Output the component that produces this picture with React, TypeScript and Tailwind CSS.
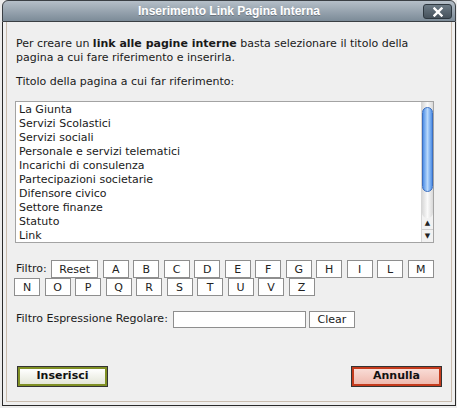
import React from "react";

const pages = [
  "La Giunta",
  "Servizi Scolastici",
  "Servizi sociali",
  "Personale e servizi telematici",
  "Incarichi di consulenza",
  "Partecipazioni societarie",
  "Difensore civico",
  "Settore finanze",
  "Statuto",
  "Link",
];

const row1 = ["A", "B", "C", "D", "E", "F", "G", "H", "I", "L", "M"];
const row2 = ["N", "O", "P", "Q", "R", "S", "T", "U", "V", "Z"];

function LetterButton({ label, wide }: { label: string; wide?: boolean }) {
  return (
    <button
      className={
        (wide ? "w-[47px] " : "w-[26px] ") +
        "h-[18px] flex items-center justify-center bg-white border border-[#8e8e8e] text-[11px] leading-none text-[#222]"
      }
    >
      {label}
    </button>
  );
}

function Scrollbar() {
  return (
    <div className="w-[12px] flex flex-col border-l border-[#d6d6d6] bg-[#f2f2f2]">
      <div className="h-[116px] flex flex-col items-center pt-[5px] rounded-b-full bg-gradient-to-r from-[#d8d8d8] via-[#fafafa] to-[#d8d8d8]">
        <div className="w-[11px] h-[85px] rounded-full border border-[#3c6fc0] bg-gradient-to-r from-[#4d8ee6] via-[#b7d8fb] to-[#4d8ee6]" />
      </div>
      <div className="h-[12px] flex items-center justify-center border-b border-[#d0d0d0] text-[7px] leading-none text-[#222]">
        ▲
      </div>
      <div className="h-[12px] flex items-center justify-center text-[7px] leading-none text-[#222]">
        ▼
      </div>
    </div>
  );
}

export default function App() {
  return (
    <div className="w-[457px] h-[408px] bg-[#ececec] pl-[2px] font-['DejaVu_Sans',Verdana,sans-serif] text-[11px] text-[#1a1a1a]">
      <div className="w-[454px]">
        {/* title bar */}
        <div className="relative h-[22px] rounded-t-[6px] border border-b border-[#3a3f44] bg-gradient-to-b from-[#b5bfc8] to-[#7c8b98] flex items-center justify-center">
          <span className="font-['Liberation_Sans',Arial,sans-serif] font-bold text-[12px] text-white [text-shadow:0_1px_0_rgba(0,0,0,0.25)]">
            Inserimento Link Pagina Interna
          </span>
          <button className="absolute right-[3px] top-[3px] w-[29px] h-[15px] rounded-[3px] border border-[#2e3840] bg-gradient-to-b from-[#6d7b86] to-[#46525c] flex items-center justify-center">
            <svg width="10" height="10" viewBox="0 0 10 10">
              <path d="M1.5 1.5 L8.5 8.5 M8.5 1.5 L1.5 8.5" stroke="white" strokeWidth="2.4" strokeLinecap="square" />
            </svg>
          </button>
        </div>

        {/* body */}
        <div className="bg-[#efefef] border-x border-b border-[#2a2a2a] px-[3px] pb-[3px]">
          <div className="border-x border-b border-[#c9bcae] px-[8px] pt-[15px] pb-[14px]">
            <p className="pl-[1px] leading-[14px]">
              Per creare un <b>link alle pagine interne</b> basta selezionare il titolo della pagina a cui fare
              riferimento e inserirla.
            </p>
            <p className="pl-[1px] mt-[10px] leading-[14px]">Titolo della pagina a cui far riferimento:</p>

            <div className="mt-[12px] w-[419px] h-[142px] flex bg-white border border-[#a3a3a3] overflow-hidden">
              <div className="flex-1 pt-[1px] pl-[3px]">
                {pages.map((p) => (
                  <div key={p} className="h-[14px] leading-[14px] whitespace-nowrap">
                    {p}
                  </div>
                ))}
              </div>
              <Scrollbar />
            </div>

            <div className="mt-[17px] -ml-[1px] flex flex-wrap items-center gap-x-[4.5px]">
              <span className="pl-[2px] h-[18px] leading-[18px]">Filtro:</span>
              <LetterButton label="Reset" wide />
              {row1.map((l) => (
                <LetterButton key={l} label={l} />
              ))}
              {row2.map((l) => (
                <LetterButton key={l} label={l} />
              ))}
            </div>

            <div className="mt-[15px] pl-[1px] flex items-center">
              <span className="w-[157px] whitespace-nowrap">Filtro Espressione Regolare:</span>
              <div className="w-[133px] h-[17px] bg-white border border-[#8e8e8e]" />
              <button className="ml-[3px] w-[46px] h-[17px] bg-white border border-[#8e8e8e] text-[11px] leading-none">
                Clear
              </button>
            </div>

            <div className="mt-[38px] pl-[2px] pr-[1px] flex justify-between">
              <button className="w-[91px] h-[21px] border border-[#333] bg-[#7f8f24] p-[2px]">
                <div className="h-full bg-gradient-to-b from-[#ffffff] to-[#e4e6d8] flex items-center justify-center font-bold text-[11px] text-[#111]">
                  Inserisci
                </div>
              </button>
              <button className="w-[91px] h-[21px] border border-[#333] bg-[#c43a1c] p-[2px]">
                <div className="h-full bg-gradient-to-b from-[#f9dcd6] to-[#efb9ae] flex items-center justify-center font-bold text-[11px] text-[#111]">
                  Annulla
                </div>
              </button>
            </div>
          </div>
        </div>
      </div>
    </div>
  );
}
